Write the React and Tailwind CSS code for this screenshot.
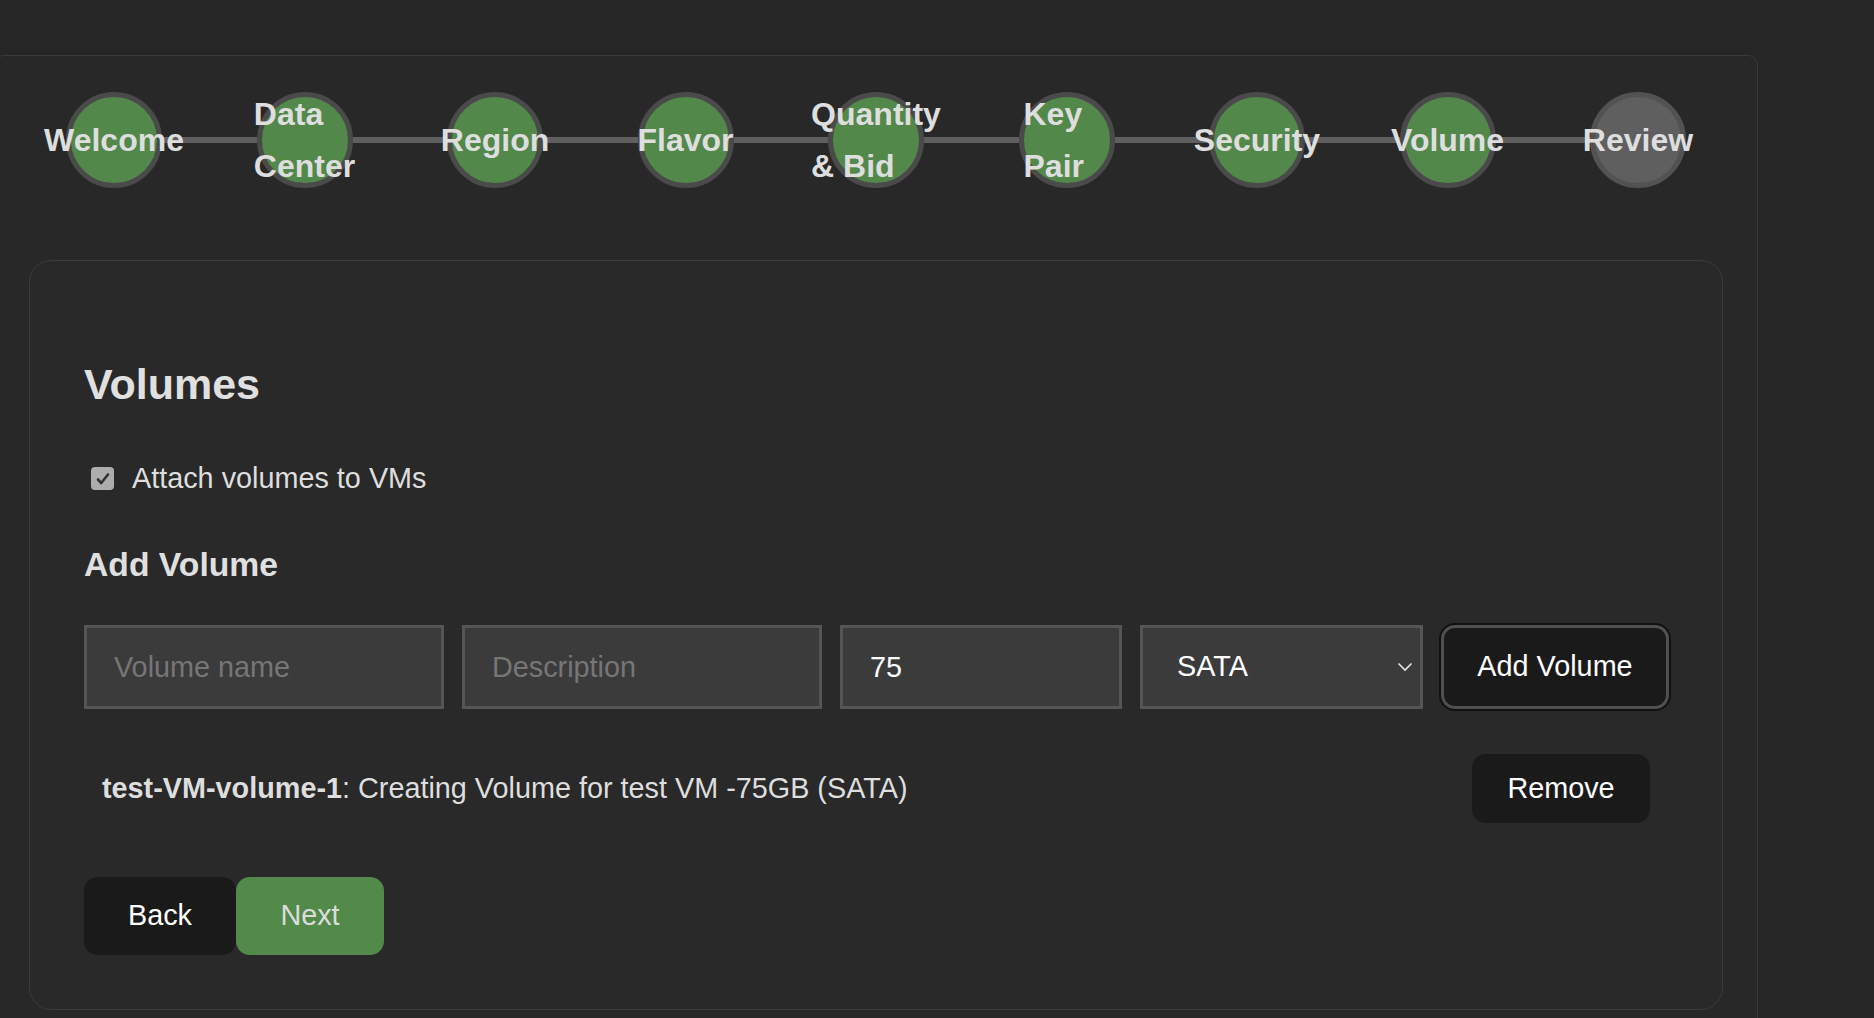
import React, { useState } from 'react';

const steps = [
  { label: 'Welcome', done: true },
  { label: 'Data Center', done: true },
  { label: 'Region', done: true },
  { label: 'Flavor', done: true },
  { label: 'Quantity & Bid', done: true },
  { label: 'Key Pair', done: true },
  { label: 'Security', done: true },
  { label: 'Volume', done: true },
  { label: 'Review', done: false },
];

const StepCircle = ({ label, done }) => (
  <div
    className={`flex h-[96px] w-[96px] shrink-0 items-center justify-center rounded-full border-[5px] ${
      done ? 'border-[#4a4a4a] bg-[#52884a]' : 'border-[#525252] bg-[#5f5f5f]'
    }`}
  >
    <span className="relative z-10 text-[32px] font-bold leading-[52px] text-[#dedede]">{label}</span>
  </div>
);

const Stepper = () => (
  <div className="flex items-center px-[71px] pt-[36px]">
    {steps.map((s, i) => (
      <React.Fragment key={s.label}>
        <StepCircle label={s.label} done={s.done} />
        {i < steps.length - 1 && <div className="h-[6px] flex-1 bg-[#5f5f5f]" />}
      </React.Fragment>
    ))}
  </div>
);

export default function App() {
  const [attach, setAttach] = useState(true);
  const [size, setSize] = useState('75');
  const [type, setType] = useState('SATA');

  const inputCls =
    'h-[84px] shrink-0 border-[3px] border-[#555555] bg-[#3b3b3b] pl-[27px] text-[28.8px] text-white placeholder:text-[#767676] outline-none';

  return (
    <div
      className="min-h-screen overflow-hidden bg-[#262626] pt-[55px] text-[#dedede]"
      style={{ fontFamily: '"Liberation Sans", Arial, sans-serif' }}
    >
      <div className="-ml-[6px] w-[1764px] rounded-[10px] border border-[#3a3a3a] bg-[#282828] pb-[40px]">
        <Stepper />

        <div className="mx-[34px] mt-[72px] rounded-[22px] border border-[#3b3b3b] bg-[#292929] px-[54px] pb-[54px] pt-[91px]">
          <h2 className="text-[43px] font-bold leading-[65px] text-[#e0e0e0]">Volumes</h2>

          <label className="mt-[40px] flex items-center gap-[18px] pl-[7px] text-[28.8px] leading-[43px]">
            <span
              onClick={() => setAttach(!attach)}
              className="flex h-[23px] w-[23px] items-center justify-center rounded-[4px] bg-[#adadad]"
            >
              {attach && (
                <svg width="16" height="16" viewBox="0 0 16 16" fill="none">
                  <path d="M3 8.5l3.2 3.5L13 3.5" stroke="#333" strokeWidth="2.6" strokeLinecap="round" strokeLinejoin="round" />
                </svg>
              )}
            </span>
            Attach volumes to VMs
          </label>

          <h3 className="mt-[39px] text-[33.7px] font-bold leading-[50px] text-[#e0e0e0]">Add Volume</h3>

          <div className="mt-[36px] flex items-stretch gap-[18px]">
            <input className={`${inputCls} w-[360px]`} placeholder="Volume name" />
            <input className={`${inputCls} w-[360px]`} placeholder="Description" />
            <input className={`${inputCls} w-[282px]`} value={size} onChange={(e) => setSize(e.target.value)} />
            <div className="relative w-[283px] shrink-0">
              <select
                value={type}
                onChange={(e) => setType(e.target.value)}
                className="h-[84px] w-full appearance-none border-[3px] border-[#555555] bg-[#3b3b3b] pl-[34px] text-[28.8px] text-white outline-none"
              >
                <option>SATA</option>
                <option>SSD</option>
                <option>NVMe</option>
              </select>
              <svg
                className="pointer-events-none absolute right-[10px] top-[37px]"
                width="16"
                height="10"
                viewBox="0 0 16 10"
                fill="none"
              >
                <path d="M1.5 1.5L8 8l6.5-6.5" stroke="#e5e5e5" strokeWidth="1.6" />
              </svg>
            </div>
            <button className="w-[228px] shrink-0 whitespace-nowrap rounded-[14px] border-[3px] border-[#505050] bg-[#1a1a1a] text-[28.8px] text-white ring-2 ring-[#111111]">
              Add Volume
            </button>
          </div>

          <div className="mt-[45px] flex items-center justify-between px-[18px] text-[28.8px]">
            <span>
              <strong className="font-bold">test-VM-volume-1</strong>: Creating Volume for test VM -75GB (SATA)
            </span>
            <button className="h-[69px] w-[178px] rounded-[14px] bg-[#1a1a1a] text-[28.8px] text-white">Remove</button>
          </div>

          <div className="mt-[54px] flex">
            <button className="h-[78px] w-[152px] rounded-[14px] bg-[#1a1a1a] text-[28.8px] text-white">Back</button>
            <button className="h-[78px] w-[148px] rounded-[14px] bg-[#528a4a] text-[28.8px] text-[#dcdcdc]">Next</button>
          </div>
        </div>
      </div>
    </div>
  );
}
